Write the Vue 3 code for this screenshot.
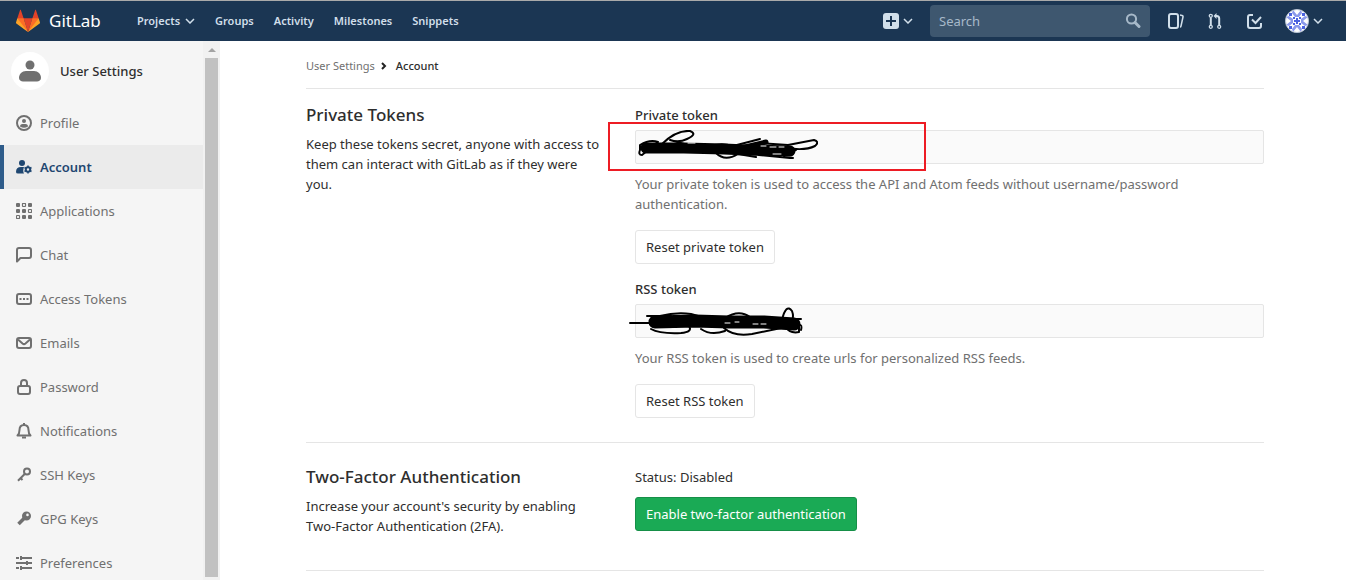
<script setup>
const navLinks = ['Groups', 'Activity', 'Milestones', 'Snippets']
const menu = [
  { label: 'Profile', icon: 'profile' },
  { label: 'Account', icon: 'account', active: true },
  { label: 'Applications', icon: 'applications' },
  { label: 'Chat', icon: 'chat' },
  { label: 'Access Tokens', icon: 'token' },
  { label: 'Emails', icon: 'mail' },
  { label: 'Password', icon: 'lock' },
  { label: 'Notifications', icon: 'bell' },
  { label: 'SSH Keys', icon: 'key' },
  { label: 'GPG Keys', icon: 'keysolid' },
  { label: 'Preferences', icon: 'sliders' },
]
const filledDots = [[0, 0], [12, 0], [0, 6], [6, 6], [6, 12], [12, 12]]
const hollowDots = [[6, 0], [12, 6], [0, 12]]
</script>

<template>
  <div class="page">
    <header class="topbar">
      <a class="brand" href="#">
        <svg class="logo" viewBox="0 0 36 36" aria-hidden="true">
          <path fill="#e24329" d="M2 14l9.38 9v-9L7.38 1.72c-.2-.63-1.17-.63-1.38 0zM34 14l-9.38 9v-9l4-12.28c.2-.63 1.17-.63 1.38 0zM18 34.38L11.38 14h13.24z" />
          <path fill="#fc6d26" d="M18 34.38L11.38 14H2l6 12zM18 34.38L24.62 14H34l-6 12z" />
          <path fill="#fca326" d="M2 14L0 20.16c-.18.56 0 1.19.5 1.56L18 34.38zM34 14l2 6.16c.18.56 0 1.19-.5 1.56L18 34.38z" />
        </svg>
        <span>GitLab</span>
      </a>
      <nav class="links">
        <a href="#">Projects
          <svg class="chev" viewBox="0 0 10 6"><path d="M1 1l4 4 4-4" /></svg>
        </a>
        <a v-for="link in navLinks" :key="link" href="#">{{ link }}</a>
      </nav>
      <div class="tools">
        <button class="plus" type="button" aria-label="New">
          <svg width="16" height="16" viewBox="0 0 16 16"><rect width="16" height="16" rx="3" fill="#d1dfea" /><path d="M8 3v10M3 8h10" stroke="#1b3653" stroke-width="2" /></svg>
          <svg class="chev" viewBox="0 0 10 6"><path d="M1 1l4 4 4-4" /></svg>
        </button>
        <div class="search">
          <input type="text" placeholder="Search" aria-label="Search">
          <svg width="16" height="16" viewBox="0 0 16 16" fill="none" stroke="#a7b9c9"><circle cx="6.5" cy="6" r="4.6" stroke-width="2" /><path d="M10 9.5l4 4" stroke-width="3" stroke-linecap="round" /></svg>
        </div>
        <a class="tool" href="#" aria-label="Issues">
          <svg width="16" height="16" viewBox="0 0 16 16" fill="none" stroke="#d1dfea" stroke-width="2"><rect x="1" y="1" width="9" height="14" rx="2" /><path d="M12 2l2 .4q1.300.3 1 1.600l-2 9q-.2 1-1 1" stroke-width="1.500" /></svg>
        </a>
        <a class="tool" href="#" aria-label="Merge requests">
          <svg width="16" height="16" viewBox="0 0 16 16" fill="none" stroke="#d1dfea" stroke-width="1.300"><circle cx="3.800" cy="2.800" r="1.500" /><circle cx="3.800" cy="13.800" r="1.500" /><circle cx="12.200" cy="13.800" r="1.500" /><path d="M3.800 4.500v7.800M12.200 12.200V5.500q0-2.500-2.500-2.500H8" stroke-width="2" /><path d="M9.500 0v6L6.500 3z" fill="#d1dfea" stroke="none" /></svg>
        </a>
        <a class="tool" href="#" aria-label="Todos">
          <svg width="16" height="16" viewBox="0 0 16 16" fill="none" stroke="#d1dfea" stroke-width="2"><path d="M7 2H4Q2 2 2 4v9q0 2 2 2h9q2 0 2-2v-3" /><path d="M6 6.500l3.500 3.500L15 4" /></svg>
        </a>
        <button class="user" type="button" aria-label="User menu">
          <svg width="24" height="24" viewBox="0 0 24 24">
            <circle cx="12" cy="12" r="11.500" fill="#fff" />
            <g fill="#4b63e0">
              <path d="M8 1l4 5 4-5 1 3-3 4h-4L7 4zM8 23l4-5 4 5 1-3-3-4h-4l-3 4zM1 8l5 4-5 4 3 1 4-3v-4L4 7zM23 8l-5 4 5 4-3 1-4-3v-4l4-3z" opacity=".65" />
              <path d="M11 9h2v6h-2zM9 11h6v2H9zM4 4h3v3H4zM17 4h3v3h-3zM4 17h3v3H4zM17 17h3v3h-3zM8 8h2v2H8zM14 8h2v2h-2zM8 14h2v2H8zM14 14h2v2h-2z" />
            </g>
            <circle cx="12" cy="12" r="11.500" fill="none" stroke="#b9c4d4" />
          </svg>
          <svg class="chev" viewBox="0 0 10 6"><path d="M1 1l4 4 4-4" /></svg>
        </button>
      </div>
    </header>

    <div class="body">
      <aside class="sidebar">
        <div class="side-content">
          <a class="context" href="#">
            <span class="avatar">
              <svg width="22" height="22" viewBox="0 0 22 22" fill="#707070"><circle cx="11" cy="5" r="4.500" /><path d="M0 18c0-4 3-7 7-7h8c4 0 7 3 7 7 0 2-2 3.500-4 3.500H4c-2 0-4-1.500-4-3.500z" /></svg>
            </span>
            <strong>User Settings</strong>
          </a>
          <ul>
            <li v-for="item in menu" :key="item.label" :class="{ active: item.active }">
              <a href="#">
                <svg width="16" height="16" viewBox="0 0 16 16" fill="none" stroke="currentColor" stroke-width="2">
                  <template v-if="item.icon === 'profile'"><circle cx="8" cy="8" r="7" /><circle cx="8" cy="6" r="2" fill="currentColor" stroke="none" /><path d="M4 11.500Q4 9 6.500 9h3Q12 9 12 11.500q-4 2.500-8 0z" fill="currentColor" stroke="none" /></template>
                  <template v-else-if="item.icon === 'account'"><g fill="currentColor" stroke="none"><circle cx="6" cy="4" r="3" /><path d="M0 13q0-5 5-5h3q-1.500 4 0 6.500H2Q0 14.500 0 13z" /></g><circle cx="12" cy="10.500" r="2.200" /><path d="M12 6.500v2M12 12.500v2M8.500 8.500l1.700 1M13.800 11.500l1.700 1M8.500 12.500l1.700-1M13.800 9.500l1.700-1" stroke-width="1.500" /></template>
                  <template v-else-if="item.icon === 'applications'"><rect v-for="d in filledDots" :key="'f' + d" :x="d[0]" :y="d[1]" width="4" height="4" rx="1" fill="currentColor" stroke="none" /><rect v-for="d in hollowDots" :key="'h' + d" :x="d[0] + .5" :y="d[1] + .5" width="3" height="3" rx=".5" stroke-width="1.200" /></template>
                  <path v-else-if="item.icon === 'chat'" d="M1 14.500V3q0-2 2-2h10q2 0 2 2v6q0 2-2 2H4.500z" stroke-linejoin="round" />
                  <template v-else-if="item.icon === 'token'"><rect x="1" y="3" width="14" height="10" rx="2" /><path d="M3.500 8h2M7 8h2M10.500 8h2" /></template>
                  <template v-else-if="item.icon === 'mail'"><rect x="1" y="3" width="14" height="10" rx="2" /><path d="M2 4.500l4.500 4q1.500 1.200 3 0l4.500-4" /></template>
                  <template v-else-if="item.icon === 'lock'"><rect x="2" y="7" width="12" height="8" rx="2" /><path d="M5 7V4q0-3 3-3t3 3v3" /></template>
                  <template v-else-if="item.icon === 'bell'"><path d="M1.500 12.500Q3.500 10.500 3.500 7q0-5 4.500-5t4.500 5q0 3.500 2 5.500z" stroke-linejoin="round" /><path d="M8 0v2M6 14.500h4" /></template>
                  <template v-else-if="item.icon === 'key'"><circle cx="11" cy="4.500" r="3" /><path d="M8.700 7L2 13.700M4 10.500l2.500 2.500" /></template>
                  <template v-else-if="item.icon === 'keysolid'"><path d="M8 7.500L2.500 13" stroke-width="3.500" /><path fill-rule="evenodd" d="M10.500 0.500a4.500 4.500 0 1 0 .01 9a4.500 4.500 0 1 0 0-9zM11.500 2.600a1.300 1.300 0 1 1-.01 2.600a1.300 1.300 0 1 1 0-2.600z" fill="currentColor" stroke="none" /></template>
                  <path v-else d="M0 3h3M5 3h11M0 8h10M12 8h4M0 13h3M5 13h11M5 1v4M11 6v4M5 11v4" />
                </svg>
                <span>{{ item.label }}</span>
              </a>
            </li>
          </ul>
        </div>
        <div class="scrollbar" aria-hidden="true"><i class="up"></i><i class="thumb"></i></div>
      </aside>

      <main class="main">
        <div class="container">
          <nav class="crumbs">
            <a href="#">User Settings</a>
            <svg width="6" height="8" viewBox="0 0 6 8" fill="none" stroke="#222" stroke-width="2"><path d="M1 1l3 3-3 3" /></svg>
            <strong>Account</strong>
          </nav>

          <section class="tokens">
            <div>
              <h4>Private Tokens</h4>
              <p>Keep these tokens secret, anyone with access to them can interact with GitLab as if they were you.</p>
            </div>
            <div>
              <label for="private">Private token</label>
              <div class="field">
                <input id="private" type="text" readonly>
                <svg class="scribble first" width="184" height="34" viewBox="0 0 184 34" fill="none" stroke="#000" stroke-linecap="round" stroke-linejoin="round">
                  <path d="M12 18L50 18 90 19 112 20 156 21" stroke-width="11" />
                  <path d="M98 20L132 12" stroke-width="5" />
                  <path d="M6 15q10-6 18-3L8 25q-4 0-2-5zM28 14Q42 0 56 1q8 3-3 8-8 4-17 1l18 5M74 17q12-5 25-1l27-7M82 23q9 9 22 1l18 3M126 13l28 2 26-5q6 2 1 6-10 5-28 2M125 25l31 3M150 23l12-3M150 27l9 1" stroke-width="2" />
                  <path d="M54 13h7M127 16h5M136 17h6M145 17h5M139 24h8" stroke="#fff" stroke-width="1" />
                </svg>
                <i class="marker"></i>
              </div>
              <p class="help">Your private token is used to access the API and Atom feeds without username/password authentication.</p>
              <button class="btn" type="button">Reset private token</button>

              <label class="second" for="rss">RSS token</label>
              <div class="field">
                <input id="rss" type="text" readonly>
                <svg class="scribble rss" width="176" height="30" viewBox="0 0 176 30" fill="none" stroke="#000" stroke-linecap="round" stroke-linejoin="round">
                  <path d="M26 15L66 14 100 15 135 15 165 17" stroke-width="13" />
                  <path d="M1 16h20M18 9h24M31 9q16-4 31-2l14 4M22 22q9 5 30 4 12-1 8-7M72 22q10 7 24 2M96 11q14-9 25-1M95 21q10 9 28 6l34-7M153 13q4-17 10-9 4 11-8 15 6 8 15 6v-5M162 12h10M167 20q7-5 5 3" stroke-width="2" />
                  <path d="M96 16h5M106 15h4M124 17h5M132 17h5M43 22h4M52 22h3" stroke="#fff" stroke-width="1" />
                </svg>
              </div>
              <p class="help">Your RSS token is used to create urls for personalized RSS feeds.</p>
              <button class="btn" type="button">Reset RSS token</button>
            </div>
          </section>

          <section class="twofactor">
            <div>
              <h4>Two-Factor Authentication</h4>
              <p>Increase your account's security by enabling Two-Factor Authentication (2FA).</p>
            </div>
            <div>
              <p class="status">Status: Disabled</p>
              <button class="btn success" type="button">Enable two-factor authentication</button>
            </div>
          </section>
        </div>
      </main>
    </div>
  </div>
</template>

<style>
body { margin: 0; }
</style>

<style scoped>
* { box-sizing: border-box; }
.page { height: 100vh; display: flex; flex-direction: column; overflow: hidden; background: #fff; color: #2e2e2e; font: 13px/20px "Noto Sans", "Open Sans", sans-serif; }
a { color: inherit; text-decoration: none; }
svg { display: block; flex: none; }
button, input { font: inherit; color: inherit; }
h4, p, ul { margin: 0; padding: 0; }
ul { list-style: none; }
strong { font-weight: 500; }

.topbar { flex: none; height: 41px; border-top: 1px solid #aaa; background: #1b3653; color: #d1dfea; display: flex; align-items: center; padding: 0 23px 0 16px; }
.brand { display: flex; align-items: center; gap: 9px; color: #fff; font-size: 17px; width: 113px; }
.logo { width: 24px; height: 24px; }
.chev { width: 10px; height: 6px; fill: none; stroke: #d1dfea; stroke-width: 1.500; }
.links { display: flex; gap: 20px; padding-left: 8px; font-size: 11px; line-height: 22px; font-weight: 600; }
.links a { display: flex; align-items: center; gap: 5px; }
.tools { margin-left: auto; display: flex; align-items: center; }
.tools button { border: 0; padding: 0; background: none; display: flex; align-items: center; gap: 4px; }
.plus { margin-right: 17px; }
.search { width: 220px; height: 32px; display: flex; align-items: center; padding: 0 9px; border-radius: 4px; background: #3e576f; margin-right: 18px; }
.search input { flex: 1; min-width: 0; border: 0; padding: 0; background: none; outline: none; }
.search input::placeholder { color: #a7b9c9; opacity: 1; }
.tool { margin-right: 23px; }

.body { flex: 1; min-height: 0; display: flex; }
.sidebar { flex: none; width: 220px; display: flex; background: #f5f5f5; overflow: hidden; }
.side-content { flex: 1; overflow: hidden; }
.context { display: flex; align-items: center; gap: 11px; height: 60px; padding-left: 11px; }
.avatar { width: 38px; height: 38px; border-radius: 50%; background: #fff; display: grid; place-items: center; }
.sidebar li a { display: flex; align-items: center; gap: 8px; height: 44px; padding-left: 16px; color: #707070; }
.sidebar li.active a { border-left: 4px solid #2e5c8a; padding-left: 12px; background: #ebebeb; color: #1f4771; font-weight: 600; }
.scrollbar { width: 17px; padding: 0 2px 3px; background: #f1f1f1; display: flex; flex-direction: column; align-items: center; }
.up { margin: 7px 0 6px; border: 4px solid transparent; border-top: 0; border-bottom-color: #a3a3a3; }
.thumb { flex: 1; width: 13px; background: #c1c1c1; }

.main { flex: 1; min-width: 0; padding: 0 16px 0 20px; }
.container { max-width: 958px; margin: 0 auto; }
.crumbs { height: 48px; border-bottom: 1px solid #e5e5e5; display: flex; align-items: center; padding-top: 2px; font-size: 11px; }
.crumbs a { color: #707070; margin-right: 6px; }
.crumbs strong { margin-left: 9px; }
section { display: grid; grid-template-columns: minmax(0, 299fr) minmax(0, 629fr); column-gap: 30px; border-bottom: 1px solid #e5e5e5; }
.tokens { padding: 16px 0 24px; }
.twofactor { padding: 24px 0 34px; }
h4 { font-size: 17px; line-height: 20px; font-weight: 500; margin-bottom: 9px; }
label { display: block; margin-bottom: 5px; font-weight: 500; }
.second { margin-top: 15px; }
.field { position: relative; }
.field input { display: block; width: 100%; height: 34px; padding: 6px 10px; border: 1px solid #e5e5e5; border-radius: 2px; background: #fafafa; outline: none; }
.scribble { position: absolute; }
.first { left: -1px; top: 0; }
.rss { left: -6px; top: 3px; }
.marker { position: absolute; left: -27px; top: -8px; width: 318px; height: 49px; border: 2px solid #ed1c24; }
.help { margin: 10px 0 16px; color: #707070; }
.btn { display: block; height: 34px; padding: 0 10px; border: 1px solid #e5e5e5; border-radius: 3px; background: #fff; }
.status { margin-bottom: 10px; }
.success { background: #1aaa55; border-color: #168f48; color: #fff; }
</style>
